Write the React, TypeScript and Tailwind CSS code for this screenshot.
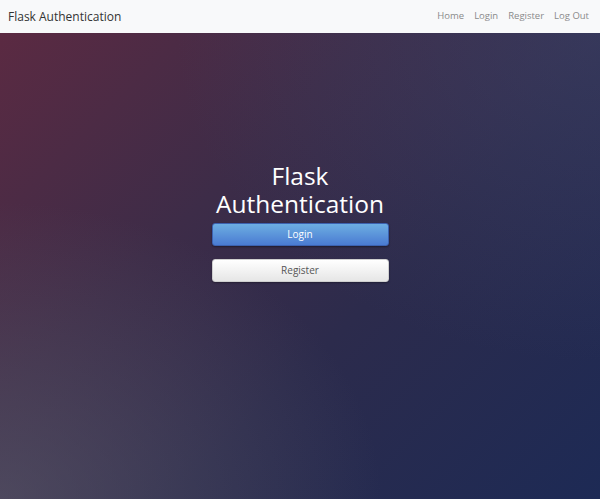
export default function App() {
  return (
    <div className="min-h-[499px] flex flex-col font-['Open_Sans',sans-serif]">
      {/* navbar */}
      <nav className="h-[33px] flex items-center justify-between px-2 bg-[#f8f9fa]">
        <span className="text-[12px] text-[#333]">Flask Authentication</span>
        <div className="flex items-center gap-[10px] text-[9.5px] text-[#8a8a8a] pr-[3px]">
          <a>Home</a>
          <a>Login</a>
          <a>Register</a>
          <a>Log Out</a>
        </div>
      </nav>

      {/* hero */}
      <main className="relative flex-1 h-[466px] overflow-hidden bg-[linear-gradient(135deg,#5b2a42_0%,#3d2c48_35%,#2c2b4c_60%,#1d2a55_100%)]">
        <div className="absolute inset-0 bg-[radial-gradient(ellipse_at_0%_100%,rgba(95,95,110,0.55)_0%,rgba(95,95,110,0)_45%)]" />
        <div className="absolute inset-0 bg-[radial-gradient(ellipse_at_100%_0%,rgba(70,80,120,0.35)_0%,rgba(70,80,120,0)_50%)]" />
        <div className="relative flex flex-col items-center pt-[129px]">
          <h1 className="w-[177px] text-center text-white text-[24.5px] leading-[28px]">
            Flask Authentication
          </h1>
          <div className="w-[177px] mt-[5px] flex flex-col gap-[13px]">
            <button className="h-[23px] rounded-[3px] border border-[#3c62b0] bg-[linear-gradient(#6daee2,#4a7bd2)] text-white text-[10px] shadow-[0_1px_2px_rgba(0,0,0,0.4)]">
              Login
            </button>
            <button className="h-[23px] rounded-[3px] border border-[#cfcfcf] bg-[linear-gradient(#ffffff,#e6e6e6)] text-[#555] text-[10px] shadow-[0_1px_2px_rgba(0,0,0,0.3)]">
              Register
            </button>
          </div>
        </div>
      </main>
    </div>
  )
}
